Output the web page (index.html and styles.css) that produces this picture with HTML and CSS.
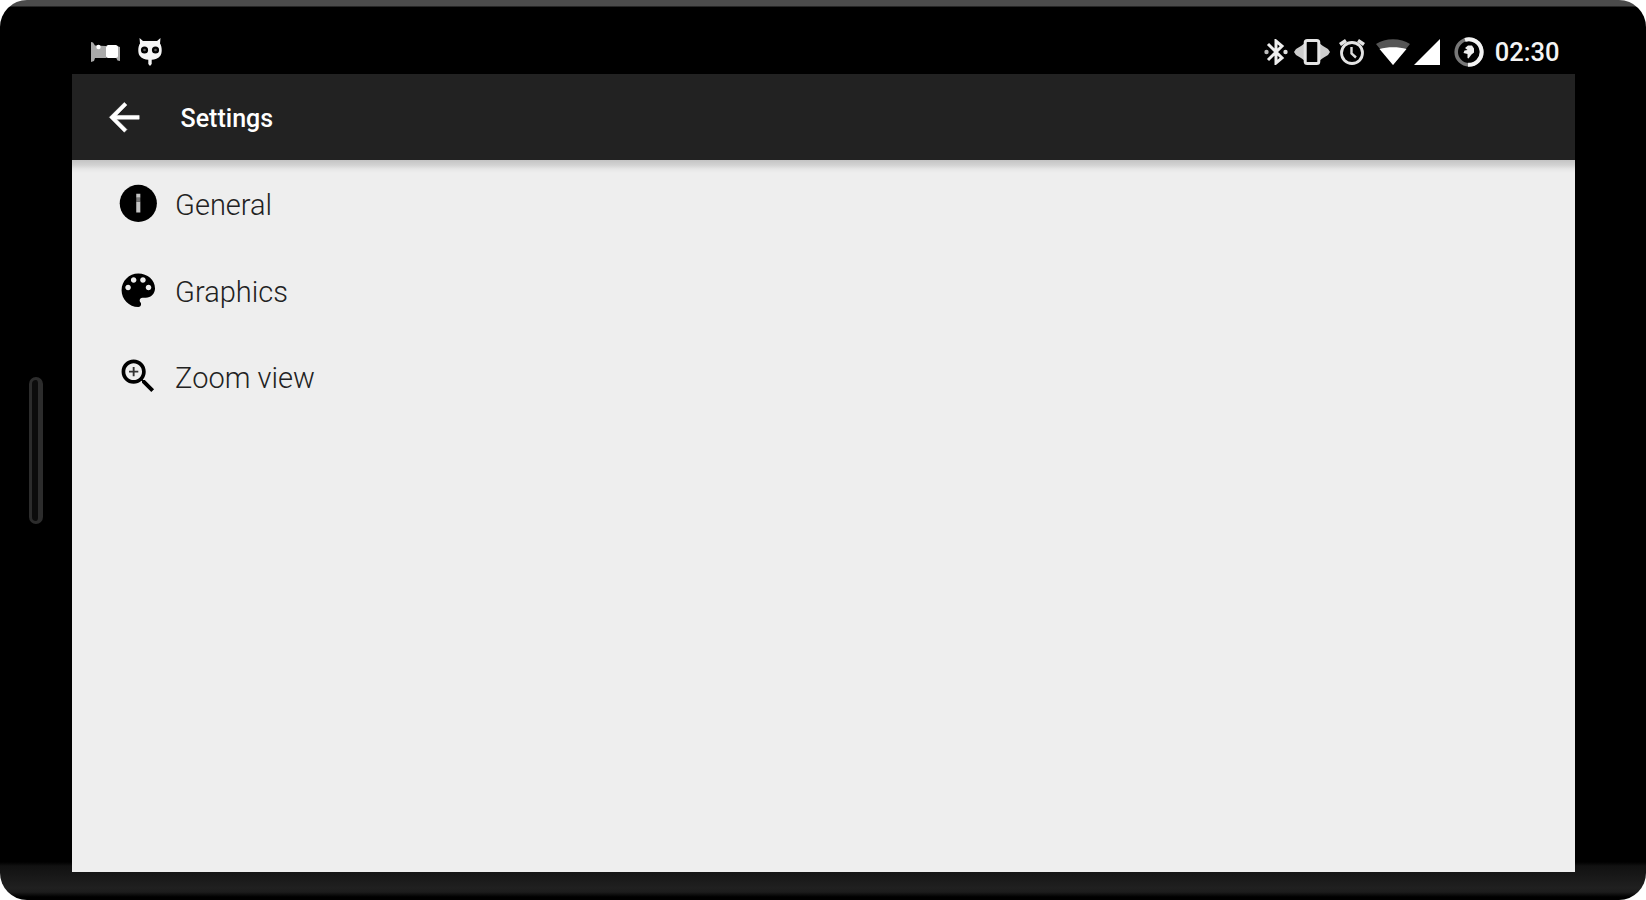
FILE: index.html
```html
<!DOCTYPE html>
<html lang="en">
<head>
    <meta charset="UTF-8">
    <meta name="viewport" content="width=device-width, initial-scale=1.0">
    <title>Settings</title>
    <link rel="stylesheet" href="styles.css">
</head>
<body>
    <div class="phone">
        <div class="speaker-side">
            <div class="speaker"></div>
        </div>

        <div class="display">
            <!-- Status Bar -->
            <div class="status-bar">
                <div class="notifications">
                    <svg width="29" height="20" viewBox="0 0 29 20">
                        <path fill="#aaa" d="M0 0l2 .5 2 3 11 .5v12L4 16l-1 3-3 1z"/>
                        <circle cx="7.500" cy="5" r="2.200" fill="#fff"/>
                        <path fill="#aaa" d="M26 4l3 1v14l-2.500-.5-1.500-3H14v-2h12z"/>
                        <rect x="15" y="3" width="12" height="13" rx="2.500" fill="#fff"/>
                    </svg>
                    <svg width="24" height="30" viewBox="0 0 24 30">
                        <path fill="#f4f4f4" d="M1.500 1l3.500 3h14l3.500-3-.5 5.500c2.200 3 2.200 9.500.5 12-2 3-6 4-8.800 4.200V27L12 29l-1.700-2v-4.300C7.500 22.500 3.500 21.500 1.500 18.500-.2 16-.2 9.500 2 6.500z"/>
                        <circle cx="6.500" cy="13" r="3.600" fill="#000"/>
                        <circle cx="17.500" cy="13" r="3.600" fill="#000"/>
                        <circle cx="6.500" cy="13" r="1.300" fill="#555"/>
                        <circle cx="17.500" cy="13" r="1.300" fill="#555"/>
                    </svg>
                </div>
                <div class="system-icons">
                    <svg class="bluetooth" width="24" height="26" viewBox="0 0 24 26">
                        <path fill="none" stroke="#eee" stroke-width="3" d="M4 5l14 14-6 5V2l6 5L4 21"/>
                        <circle cx="2.500" cy="13" r="2.200" fill="#bbb"/>
                        <circle cx="21.500" cy="13" r="2.200" fill="#ddd"/>
                    </svg>
                    <svg class="vibrate" width="36" height="26" viewBox="0 0 36 26">
                        <path fill="#ccc" d="M11 4v18l-4-3-5-3-2-3 2-3 5-3zM25 4v18l4-3 5-3 2-3-2-3-5-3z"/>
                        <rect x="11.200" y="1.500" width="13.600" height="23" rx="2" fill="#000" stroke="#e4e4e4" stroke-width="3"/>
                    </svg>
                    <svg class="alarm" width="26" height="26" viewBox="0 0 26 26">
                        <circle cx="13" cy="14" r="10.500" fill="none" stroke="#e4e4e4" stroke-width="2.800"/>
                        <path fill="none" stroke="#e4e4e4" stroke-width="3.600" d="M1 5.500l6-4M25 5.500l-6-4"/>
                        <path fill="none" stroke="#ddd" stroke-width="2.400" d="M12.500 8v6.500l4.500 4"/>
                    </svg>
                    <svg class="wifi" width="34" height="26" viewBox="0 0 34 26">
                        <path fill="#555" d="M17 26L0 5C9-1.500 25-1.500 34 5z"/>
                        <path fill="#fff" d="M17 26L3.500 10c8-2.500 19-2.500 27 0z"/>
                    </svg>
                    <svg class="signal" width="26" height="26" viewBox="0 0 26 26">
                        <path fill="#fff" d="M0 26L26 0v26z"/>
                    </svg>
                    <svg class="battery" width="30" height="30" viewBox="0 0 30 30">
                        <circle cx="15" cy="15" r="12.800" fill="none" stroke="#777" stroke-width="3.600"/>
                        <path fill="none" stroke="#f4f4f4" stroke-width="4" d="M11 2.800A12.800 12.800 0 1 1 14 27.800"/>
                        <path fill="#eee" d="M11 11l3-2.500h4l2 3v4l-2.500 2-3 4-1-.5v-4l-4-1 1-2.500 3-.5z"/>
                    </svg>
                    <span class="clock">02:30</span>
                </div>
            </div>

            <!-- App Bar -->
            <div class="app-bar">
                <svg class="icon" viewBox="0 0 24 24" fill="#fff" stroke="#fff" stroke-width=".3">
                    <path d="M20 11H7.830l5.590-5.590L12 4l-8 8 8 8 1.410-1.410L7.830 13H20z"/>
                </svg>
                <h1>Settings</h1>
            </div>

            <!-- Settings List -->
            <div class="settings">
                <div class="item">
                    <svg class="icon" viewBox="0 0 24 24">
                        <circle cx="12" cy="12" r="10"/>
                        <path fill="#c4c4c4" d="M10.900 6.800h2.200v2.200h-2.200zM10.900 11h2.200v6h-2.200z"/>
                        <path fill="#777" d="M10.900 9h2.200v2h-2.200z"/>
                    </svg>
                    <span>General</span>
                </div>
                <div class="item">
                    <svg class="icon" viewBox="0 0 24 24">
                        <path d="M12 3c-4.970 0-9 4.030-9 9s4.030 9 9 9c.83 0 1.500-.67 1.500-1.500 0-.39-.15-.74-.39-1.010-.23-.26-.38-.61-.38-.99 0-.83.67-1.500 1.500-1.500H16c2.760 0 5-2.240 5-5 0-4.420-4.030-8-9-8zm-5.500 9c-.83 0-1.500-.67-1.500-1.500S5.670 9 6.500 9 8 9.670 8 10.500 7.330 12 6.500 12zm3-4C8.670 8 8 7.330 8 6.500S8.670 5 9.500 5s1.500.67 1.500 1.500S10.330 8 9.500 8zm5 0c-.83 0-1.500-.67-1.500-1.500S13.670 5 14.500 5s1.500.67 1.500 1.500S15.330 8 14.500 8zm3 4c-.83 0-1.500-.67-1.500-1.500S16.670 9 17.500 9s1.500.67 1.500 1.500-.67 1.500-1.500 1.500z"/>
                    </svg>
                    <span>Graphics</span>
                </div>
                <div class="item">
                    <svg class="icon" viewBox="0 0 24 24">
                        <path d="M15.500 14h-.79l-.28-.27C15.410 12.590 16 11.110 16 9.500 16 5.910 13.090 3 9.500 3S3 5.910 3 9.500 5.910 16 9.500 16c1.610 0 3.090-.59 4.230-1.570l.27.28v.79l5 4.990L20.490 19l-4.990-5zm-6 0C7.010 14 5 11.990 5 9.500S7.010 5 9.500 5 14 7.010 14 9.500 11.990 14 9.500 14z"/>
                        <path fill="#333" d="M12 10h-2v2H9v-2H7V9h2V7h1v2h2z"/>
                    </svg>
                    <span>Zoom view</span>
                </div>
            </div>
        </div>
    </div>
</body>
</html>
```

FILE: styles.css
```css
* {
    box-sizing: border-box;
}

body {
    margin: 0;
    background: #fff;
    font-family: Roboto, "Liberation Sans", sans-serif;
    overflow: hidden;
}

h1 {
    margin: 0;
}

svg {
    display: block;
    flex: none;
}

/* Phone Frame */
.phone {
    display: flex;
    height: 900px;
    padding: 6px 71.5px 0 0;
    border-radius: 27px;
    background: linear-gradient(#4b4b4b 0, #4b4b4b 6px, #000 7px, #000 862px, #111 866px, #202020 888px, #1c1c1c 892px, #000 897px);
    overflow: hidden;
}

.speaker-side {
    display: flex;
    flex: none;
    width: 71.5px;
    padding: 371px 0 0 29px;
}

.speaker {
    width: 14px;
    height: 147px;
    border: 3px solid #2c2c2c;
    border-right-width: 5px;
    border-radius: 7px;
    background: #0c0c0c;
}

.display {
    display: flex;
    flex: 1;
    flex-direction: column;
    height: 866px;
}

/* Status Bar */
.status-bar {
    display: flex;
    justify-content: space-between;
    align-items: center;
    height: 68px;
    padding: 23px 15px 0 19px;
    color: #f4f4f4;
}

.notifications,
.system-icons {
    display: flex;
    align-items: center;
}

.notifications {
    gap: 18px;
}

.vibrate {
    margin-left: 6px;
}

.alarm {
    margin-left: 9px;
}

.wifi {
    margin-left: 11px;
}

.signal {
    margin-left: 4px;
}

.battery {
    margin-left: 14px;
}

.clock {
    margin-left: 11px;
    font-size: 25.5px;
    font-weight: 500;
    line-height: 30px;
}

/* App Bar */
.app-bar {
    display: flex;
    align-items: center;
    height: 86px;
    padding-left: 30px;
    background: #222;
    color: #fff;
}

.app-bar h1 {
    margin: 2px 0 0 34.5px;
    font-size: 25px;
    font-weight: 500;
}

.icon {
    width: 44.6px;
    height: 44.6px;
}

/* Settings List */
.settings {
    flex: 1;
    background: linear-gradient(#c4c4c4, #d2d2d2 5px, #e6e6e6 9px, #eee 13px);
}

.item {
    display: flex;
    align-items: center;
    height: 86.7px;
    padding-left: 44px;
    color: #222;
    font-size: 29px;
    font-weight: 300;
}

.item span {
    margin: 3px 0 0 15px;
}
```
